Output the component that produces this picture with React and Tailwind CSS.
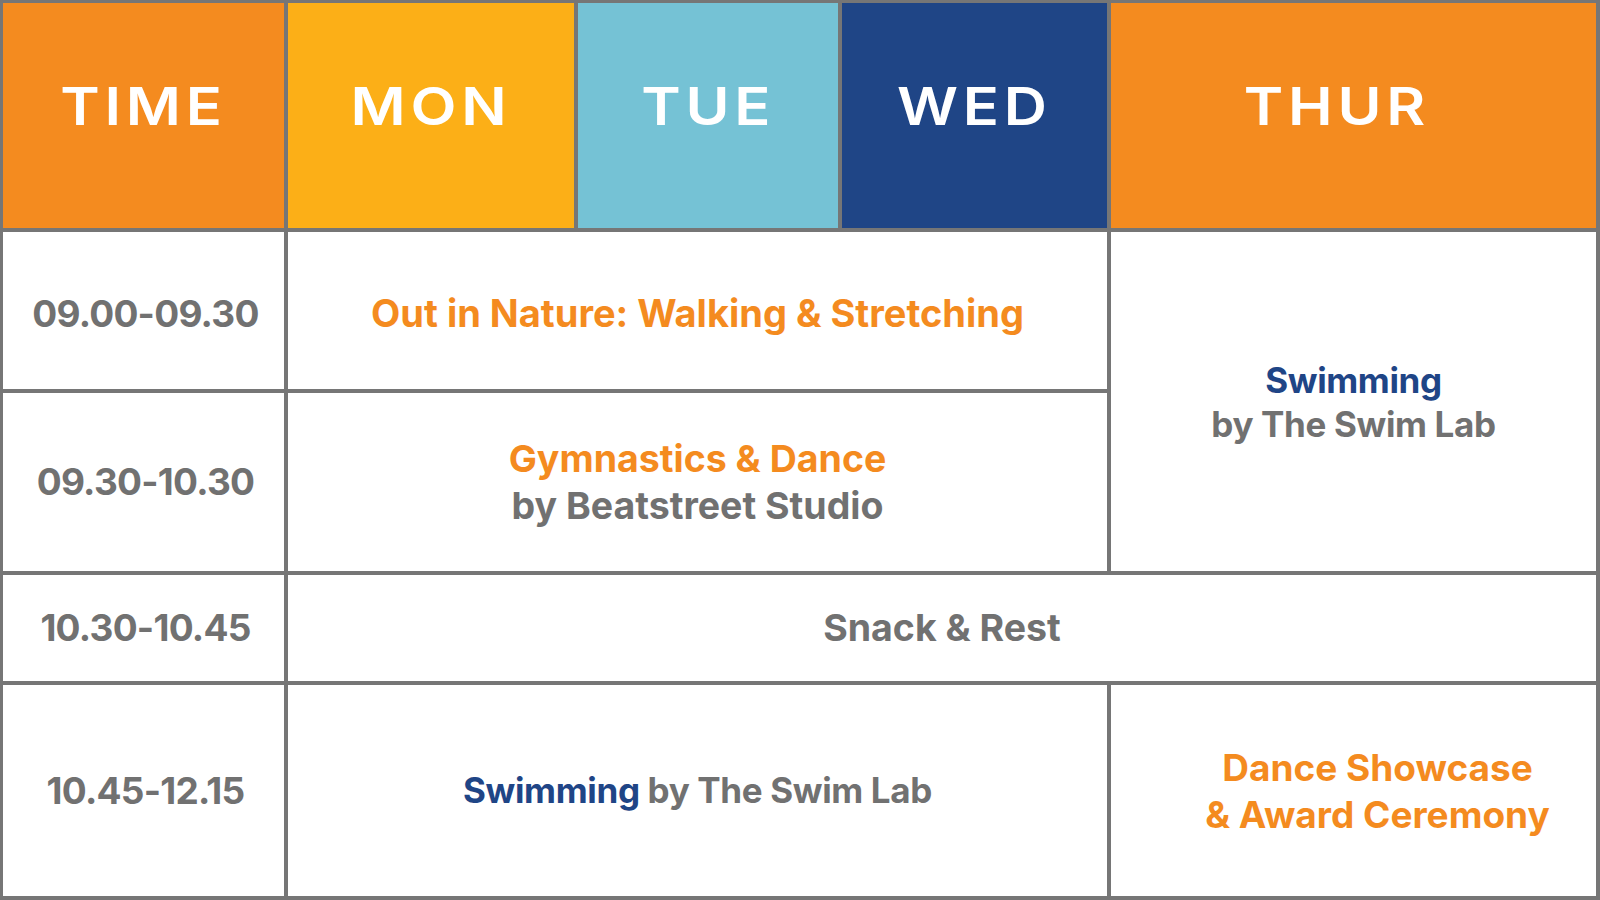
import React from 'react';

const orange = 'text-[#F48B1F]';
const blue = 'text-[#1F4586]';

const HeadCell = ({ bg, pad = '', children }) => (
  <div className={`${bg} flex items-center justify-center pb-[17px] ${pad}`}>
    <span className="text-white font-semibold text-[52px] tracking-[0.08em] leading-none scale-x-[1.15]">{children}</span>
  </div>
);

const TimeCell = ({ children, pad = '' }) => (
  <div className={`bg-white flex items-center justify-center pl-[4px] ${pad}`}>
    <span className="text-[#717171] font-bold text-[37px] tracking-[-0.02em]">{children}</span>
  </div>
);

export default function App() {
  return (
    <div
      className="w-[1600px] h-[900px] bg-[#767676] pt-[3px] pl-[3px] pr-[4px] pb-[4px] overflow-hidden"
      style={{ fontFamily: 'Inter, "Liberation Sans", sans-serif' }}
    >
      <div className="grid w-full h-full gap-[4px] grid-cols-[281px_286px_260px_265px_1fr] grid-rows-[225px_157px_178px_106px_1fr]">
        <HeadCell bg="bg-[#F48B1F]">TIME</HeadCell>
        <HeadCell bg="bg-[#FCAF17]">MON</HeadCell>
        <HeadCell bg="bg-[#75C2D5]">TUE</HeadCell>
        <HeadCell bg="bg-[#1F4586]">WED</HeadCell>
        <HeadCell bg="bg-[#F48B1F]" pad="pr-[34px]">THUR</HeadCell>

        <TimeCell pad="pt-[7px]">09.00-09.30</TimeCell>
        <div className="col-span-3 bg-white flex items-center justify-center pt-[6px]">
          <span className={`${orange} font-bold text-[38px]`}>Out in Nature: Walking &amp; Stretching</span>
        </div>
        <div className="row-span-2 bg-white flex flex-col items-center justify-center text-[35px] font-bold leading-[44px] tracking-[-0.01em]">
          <span className={blue}>Swimming</span>
          <span className="text-[#717171]">by The Swim Lab</span>
        </div>

        <TimeCell>09.30-10.30</TimeCell>
        <div className="col-span-3 bg-white flex flex-col items-center justify-center text-[37.5px] font-bold leading-[47px]">
          <span className={orange}>Gymnastics &amp; Dance</span>
          <span className="text-[#717171]">by Beatstreet Studio</span>
        </div>

        <TimeCell>10.30-10.45</TimeCell>
        <div className="col-span-4 bg-white flex items-center justify-center">
          <span className="text-[#717171] font-bold text-[37.5px]">Snack &amp; Rest</span>
        </div>

        <TimeCell>10.45-12.15</TimeCell>
        <div className="col-span-3 bg-white flex items-center justify-center">
          <span className="font-bold text-[35px] tracking-[-0.01em]">
            <span className={blue}>Swimming</span>
            <span className="text-[#717171]"> by The Swim Lab</span>
          </span>
        </div>
        <div className="bg-white flex flex-col items-center justify-center pl-[48px] text-[37px] font-bold leading-[47px]">
          <span className={orange}>Dance Showcase</span>
          <span className={orange}>&amp; Award Ceremony</span>
        </div>
      </div>
    </div>
  );
}
